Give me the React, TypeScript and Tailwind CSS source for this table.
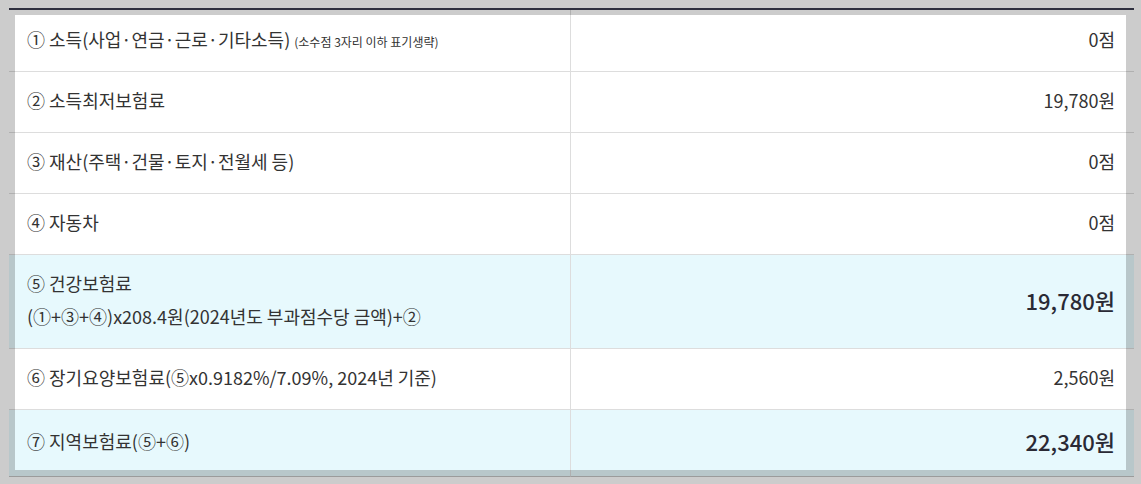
import React from "react";

type Row = {
  label: React.ReactNode;
  value: string;
  hl?: boolean;
};

const rows: Row[] = [
  {
    label: (
      <>
        ① 소득(사업·연금·근로·기타소득){" "}
        <span className="text-[12px] leading-none align-baseline">(소수점 3자리 이하 표기생략)</span>
      </>
    ),
    value: "0점",
  },
  { label: <>② 소득최저보험료</>, value: "19,780원" },
  { label: <>③ 재산(주택·건물·토지·전월세 등)</>, value: "0점" },
  { label: <>④ 자동차</>, value: "0점" },
  {
    label: (
      <span className="block leading-[32.5px]">
        ⑤ 건강보험료
        <br />
        (①+③+④)x208.4원(2024년도 부과점수당 금액)+②
      </span>
    ),
    value: "19,780원",
    hl: true,
  },
  { label: <>⑥ 장기요양보험료(⑤x0.9182%/7.09%, 2024년 기준)</>, value: "2,560원" },
  { label: <>⑦ 지역보험료(⑤+⑥)</>, value: "22,340원", hl: true },
];

export default function App() {
  return (
    <div
      className="w-[1141px] h-[484px] bg-[#cccccc] pt-[8px] pl-[9px] overflow-hidden"
      style={{ fontFamily: '"Noto Sans CJK KR", "Noto Sans", sans-serif' }}
    >
      <div className="relative w-[1125px] border-t-2 border-t-[#2e2f3e]">
        <table className="w-full border-separate border-spacing-0 table-fixed text-[18px] text-[#333]">
          <colgroup>
            <col className="w-[562px]" />
            <col />
          </colgroup>
          <tbody>
            {rows.map((r, i) => {
              const bg = r.hl ? "bg-[#e7f9fd]" : "bg-white";
              const border =
                i < rows.length - 1
                  ? "border-b border-b-[#dddddd]"
                  : "border-b border-b-[#c2c2c2]";
              const pt = i === 0 ? "pt-[13px]" : "pt-[12px]";
              return (
                <tr key={i}>
                  <td
                    className={`${bg} ${border} ${pt} border-r border-r-[#dddddd] pl-[18px] pr-3 pb-[16px] leading-[32px] align-middle`}
                  >
                    <div className="h-full">{r.label}</div>
                  </td>
                  <td
                    className={`${bg} ${border} ${pt} pr-[19px] pb-[16px] text-right align-middle ${
                      r.hl
                        ? "text-[22px] font-medium leading-[38px] text-[#2a2a35]"
                        : "leading-[32px]"
                    }`}
                  >
                    {r.value}
                  </td>
                </tr>
              );
            })}
          </tbody>
        </table>
        <div className="pointer-events-none absolute top-0 left-0 right-0 bottom-0 border-t-[5px] border-l-[6px] border-r-[8px] border-b-[7px] border-[rgba(0,0,0,0.2)]" />
      </div>
    </div>
  );
}
